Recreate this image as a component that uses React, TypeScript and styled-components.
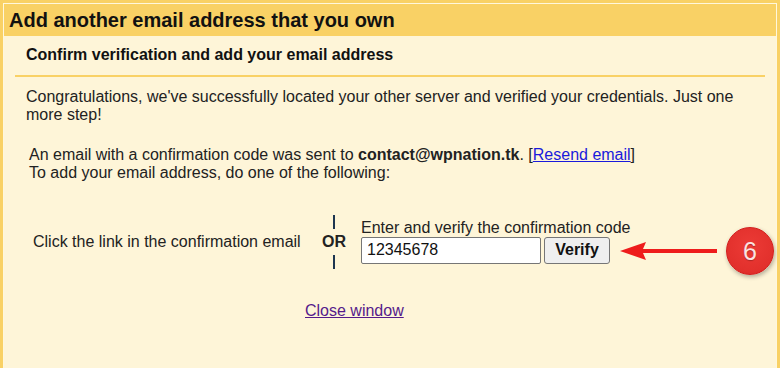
import React from "react";
import styled, { createGlobalStyle } from "styled-components";

const Global = createGlobalStyle`
  html, body { margin: 0; padding: 0; overflow: hidden; background: #fef5d8; }
  body { font-family: "Liberation Sans", Arial, sans-serif; color: #222; }
`;

const Frame = styled.div`
  position: relative;
  width: 780px;
  height: 368px;
  box-sizing: border-box;
  border: 3px solid #f9d165;
  border-bottom: none;
  background: #fef5d8;
  overflow: hidden;
`;

const Inner = styled.div`
  border: 1px solid #fff7dc;
  border-bottom: none;
  height: 100%;
  box-sizing: border-box;
`;

const Header = styled.div`
  background: #f9d165;
  height: 32px;
  display: flex;
  align-items: center;
  padding-left: 5px;
  font-size: 20px;
  font-weight: bold;
  color: #111;
`;

const Body = styled.div`
  padding: 0 11px;
  display: flex;
  flex-direction: column;
`;

const SubHeader = styled.div`
  font-size: 16px;
  line-height: 18px;
  font-weight: bold;
  color: #111;
  padding: 10px 0 11px 11px;
  border-bottom: 2px solid #f9d165;
`;

const Para = styled.p<{ $indent?: number; $top: number }>`
  margin: ${(p) => p.$top}px 0 0 ${(p) => 11 + (p.$indent ?? 0)}px;
  font-size: 16px;
  line-height: 18px;
  padding-right: 20px;
`;

const Link = styled.a<{ $visited?: boolean }>`
  color: ${(p) => (p.$visited ? "#551a8b" : "#1a1adc")};
  text-decoration: underline;
  cursor: pointer;
`;

const ChoiceRow = styled.div`
  margin-top: 33px;
  margin-left: 18px;
  display: flex;
  align-items: center;
`;

const ChoiceText = styled.div`
  font-size: 16px;
  width: 285px;
`;

const OrColumn = styled.div`
  width: 32px;
  display: flex;
  flex-direction: column;
  align-items: center;
  gap: 4px;
  font-weight: bold;
  font-size: 16px;
  line-height: 18px;
`;

const OrLine = styled.div`
  width: 2px;
  height: 14px;
  background: #1d3550;
`;

const CodeColumn = styled.div`
  margin-left: 11px;
  display: flex;
  flex-direction: column;
  gap: 1px;
  margin-top: -2px;
`;

const CodeLabel = styled.div`
  font-size: 16px;
  line-height: 17px;
`;

const CodeControls = styled.div`
  display: flex;
  gap: 3px;
`;

const CodeInput = styled.input`
  width: 180px;
  height: 27px;
  box-sizing: border-box;
  border: 1px solid #767676;
  border-radius: 2px;
  background: #fff;
  font-family: "Liberation Sans", Arial, sans-serif;
  font-size: 16px;
  padding: 0 5px;
  color: #111;
  outline: none;
`;

const VerifyButton = styled.button`
  width: 66px;
  height: 27px;
  box-sizing: border-box;
  border: 1px solid #767676;
  border-radius: 3px;
  background: #efefef;
  font-family: "Liberation Sans", Arial, sans-serif;
  font-size: 16px;
  font-weight: bold;
  color: #111;
  padding: 0;
`;

const Footer = styled.div`
  margin-top: 33px;
  padding-left: 290px;
  font-size: 16px;
`;

const Arrow = styled.svg`
  position: absolute;
  left: 617px;
  top: 236px;
`;

const Badge = styled.div`
  position: absolute;
  left: 723px;
  top: 224px;
  width: 46px;
  height: 46px;
  border-radius: 50%;
  background: radial-gradient(circle at 50% 40%, #ec3b36 0%, #e2302c 70%, #d42522 100%);
  border: 1px solid #d21e1e;
  box-shadow: 1px 2px 4px rgba(0, 0, 0, 0.3);
  color: #fbe3e1;
  font-family: "Liberation Sans", Arial, sans-serif;
  font-size: 25px;
  display: flex;
  align-items: center;
  justify-content: center;
  text-shadow: 0 1px 1px rgba(0,0,0,0.25);
`;

export default function App() {
  return (
    <>
      <Global />
      <Frame>
        <Inner>
          <Header>Add another email address that you own</Header>
          <Body>
            <SubHeader>Confirm verification and add your email address</SubHeader>
            <Para $top={11}>
              Congratulations, we've successfully located your other server and verified your credentials. Just one
              more step!
            </Para>
            <Para $top={22} $indent={3}>
              An email with a confirmation code was sent to <b>contact@wpnation.tk</b>. [<Link>Resend email</Link>]
              <br />
              To add your email address, do one of the following:
            </Para>
            <ChoiceRow>
              <ChoiceText>Click the link in the confirmation email</ChoiceText>
              <OrColumn>
                <OrLine />
                OR
                <OrLine />
              </OrColumn>
              <CodeColumn>
                <CodeLabel>Enter and verify the confirmation code</CodeLabel>
                <CodeControls>
                  <CodeInput defaultValue="12345678" />
                  <VerifyButton>Verify</VerifyButton>
                </CodeControls>
              </CodeColumn>
            </ChoiceRow>
            <Footer>
              <Link $visited>Close window</Link>
            </Footer>
          </Body>
        </Inner>
        <Arrow width="100" height="24" viewBox="0 0 100 24">
          <path d="M0 12 L26 3 L23 10 L97 10 L97 14 L23 14 L26 21 Z" fill="#ee1c1c" />
        </Arrow>
        <Badge>6</Badge>
      </Frame>
    </>
  );
}
